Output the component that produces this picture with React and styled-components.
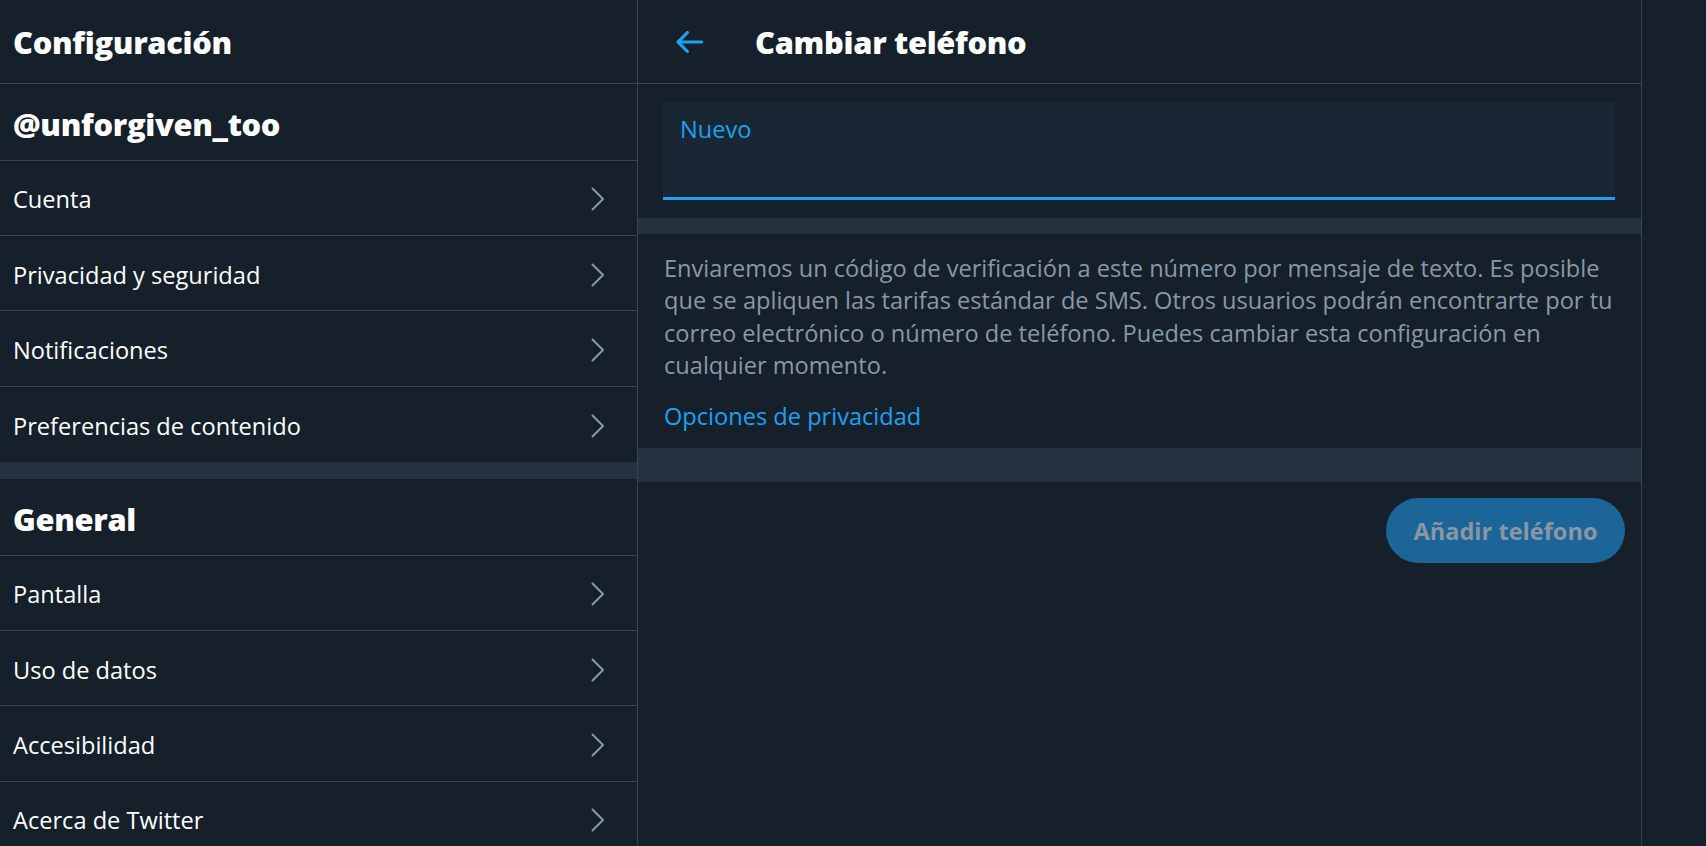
import React from 'react';
import styled, { createGlobalStyle } from "styled-components";

const GlobalStyle = createGlobalStyle`
  html, body {
    margin: 0;
    padding: 0;
    background: #15202b;
    font-family: "Open Sans", "Noto Sans", sans-serif;
    color: #ffffff;
  }
  * { box-sizing: border-box; }
`;

const Page = styled.div`
  display: flex;
  height: 846px;
  overflow: hidden;
  background: #15202b;
`;

const Sidebar = styled.aside`
  width: 638px;
  flex-shrink: 0;
  border-right: 1px solid #38444d;
  display: flex;
  flex-direction: column;
`;

const SideHeader = styled.div`
  height: 84px;
  flex-shrink: 0;
  display: flex;
  align-items: center;
  padding: 0 13px 0;
  border-bottom: 1px solid #38444d;
  font-size: 30.8px;
  font-weight: 800;
  letter-spacing: -0.3px;
`;

const SectionTitle = styled.div`
  height: 76.5px;
  flex-shrink: 0;
  display: flex;
  align-items: center;
  padding: 4px 13px 0;
  border-bottom: 1px solid #38444d;
  font-size: 30.8px;
  font-weight: 800;
  letter-spacing: -0.3px;
`;

const Row = styled.div`
  height: 75.4px;
  flex-shrink: 0;
  display: flex;
  align-items: center;
  justify-content: space-between;
  padding: 3px 31px 0 13px;
  border-bottom: ${p => (p.$last ? "none" : "1px solid #38444d")};
  font-size: 23.6px;
  color: #ffffff;
`;

const Band = styled.div`
  height: ${p => p.$h}px;
  flex-shrink: 0;
  background: #253341;
`;

const Main = styled.main`
  width: 1004px;
  flex-shrink: 0;
  border-right: 1px solid #38444d;
  display: flex;
  flex-direction: column;
`;

const MainHeader = styled.div`
  height: 84px;
  flex-shrink: 0;
  display: flex;
  align-items: center;
  padding: 0 0 0 32px;
  border-bottom: 1px solid #38444d;
`;

const BackButton = styled.div`
  width: 38px;
  height: 38px;
  margin-right: 47px;
  display: flex;
  align-items: center;
  justify-content: center;
  color: #1da1f2;
`;

const Title = styled.h2`
  margin: 0;
  font-size: 30.8px;
  font-weight: 800;
  letter-spacing: -0.3px;
`;

const FieldWrap = styled.div`
  padding: 18px 26px 18px 25px;
`;

const Field = styled.div`
  height: 98px;
  background: #192734;
  border-radius: 3px 3px 0 0;
  border-bottom: 3px solid #1da1f2;
  padding: 11px 17px;
`;

const FieldLabel = styled.div`
  font-size: 23.6px;
  line-height: 33px;
  color: #1da1f2;
`;

const InfoBlock = styled.div`
  padding: 18px 25px 16px 26px;
`;

const InfoText = styled.p`
  margin: 0 0 18px;
  font-size: 23.6px;
  line-height: 32.4px;
  color: #8899a6;
`;

const InfoLink = styled.a`
  display: block;
  font-size: 23.6px;
  line-height: 32.6px;
  color: #1da1f2;
  text-decoration: none;
`;

const Actions = styled.div`
  display: flex;
  justify-content: flex-end;
  padding: 16px 16px 0;
`;

const AddButton = styled.button`
  height: 65px;
  min-width: 239px;
  padding: 0 26px;
  border: none;
  border-radius: 9999px;
  background: #1b6599;
  color: #8a97a2;
  font-family: inherit;
  font-size: 23.6px;
  font-weight: 700;
  cursor: default;
`;

const Chevron = () => (
  <svg width="16" height="24" viewBox="0 0 16 24" fill="none">
    <polyline points="2.5,1.5 13,12 2.5,22.5" stroke="#8899a6" strokeWidth="2" strokeLinecap="round" strokeLinejoin="round" />
  </svg>
);

const ArrowLeft = () => (
  <svg width="38" height="38" viewBox="0 0 24 24" fill="currentColor">
    <path d="M20 11H7.414l4.293-4.293c.39-.39.39-1.023 0-1.414s-1.023-.39-1.414 0l-6 6c-.39.39-.39 1.023 0 1.414l6 6c.195.195.45.293.707.293s.512-.098.707-.293c.39-.39.39-1.023 0-1.414L7.414 13H20c.553 0 1-.447 1-1s-.447-1-1-1z" />
  </svg>
);

const accountItems = ["Cuenta", "Privacidad y seguridad", "Notificaciones", "Preferencias de contenido"];
const generalItems = ["Pantalla", "Uso de datos", "Accesibilidad", "Acerca de Twitter"];

const App = () => {
  return (
    <Page>
      <GlobalStyle />
      <Sidebar>
        <SideHeader>Configuración</SideHeader>
        <SectionTitle>@unforgiven_too</SectionTitle>
        {accountItems.map((item, i) => (
          <Row key={item} $last={i === accountItems.length - 1}>
            <span>{item}</span>
            <Chevron />
          </Row>
        ))}
        <Band $h={17} />
        <SectionTitle>General</SectionTitle>
        {generalItems.map(item => (
          <Row key={item}>
            <span>{item}</span>
            <Chevron />
          </Row>
        ))}
      </Sidebar>
      <Main>
        <MainHeader>
          <BackButton><ArrowLeft /></BackButton>
          <Title>Cambiar teléfono</Title>
        </MainHeader>
        <FieldWrap>
          <Field>
            <FieldLabel>Nuevo</FieldLabel>
          </Field>
        </FieldWrap>
        <Band $h={16} />
        <InfoBlock>
          <InfoText>
            Enviaremos un código de verificación a este número por mensaje de texto. Es posible que se apliquen las tarifas estándar de SMS. Otros usuarios podrán encontrarte por tu correo electrónico o número de teléfono. Puedes cambiar esta configuración en cualquier momento.
          </InfoText>
          <InfoLink href="#">Opciones de privacidad</InfoLink>
        </InfoBlock>
        <Band $h={34} />
        <Actions>
          <AddButton>Añadir teléfono</AddButton>
        </Actions>
      </Main>
    </Page>
  );
};

export default App;
